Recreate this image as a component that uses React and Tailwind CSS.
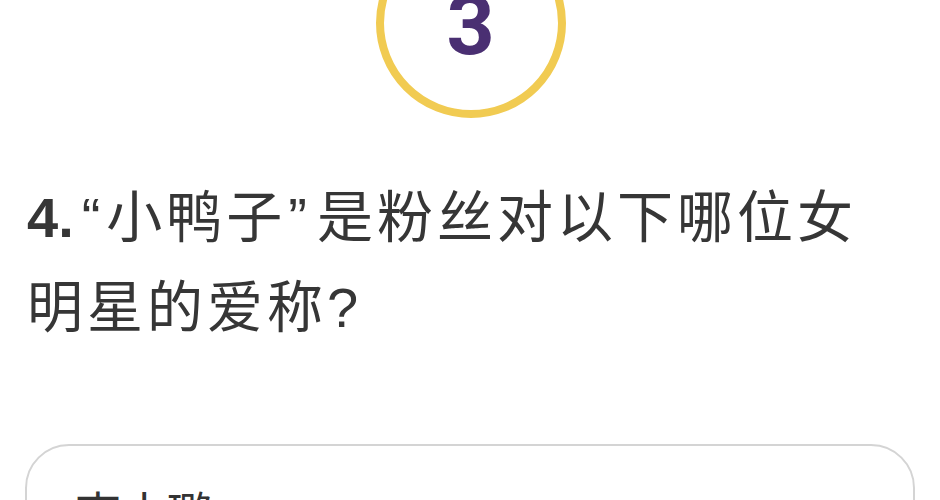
export default function App() {
  return (
    <div className="w-[940px] h-[500px] overflow-hidden bg-white font-['Noto_Sans_CJK_SC',sans-serif]">
      {/* countdown ring */}
      <div className="flex justify-center">
        <div className="mt-[-72px] ml-[1px] w-[190px] h-[190px] rounded-full border-[8px] border-[#f1cb52] flex items-center justify-center">
          <span className="font-['Roboto',sans-serif] text-[84px] leading-none font-bold text-[#4a2f72] pt-[6px]">
            3
          </span>
        </div>
      </div>

      {/* question */}
      <div className="mt-[52px] pl-[27px] text-[56px] leading-[85px] text-[#363636] tracking-[4px]">
        <div>
          <span className="font-bold font-['Liberation_Sans',sans-serif] tracking-[0px]">4.</span>
          <span className="font-['Liberation_Sans',sans-serif] ml-[8px] mr-[2px]">“</span>小鸭子
          <span className="font-['Liberation_Sans',sans-serif] ml-[2px] mr-[6px]">”</span>是粉丝对以下哪位女
        </div>
        <div>
          明星的爱称<span className="font-['Liberation_Sans',sans-serif]">?</span>
        </div>
      </div>

      {/* option */}
      <div className="mt-[94px] mx-[25px] h-[200px] rounded-[44px] border-2 border-[#d4d4d4] pl-[48px] pt-[41px]">
        <span className="text-[46px] leading-none text-[#333]">李小璐</span>
      </div>
    </div>
  );
}
